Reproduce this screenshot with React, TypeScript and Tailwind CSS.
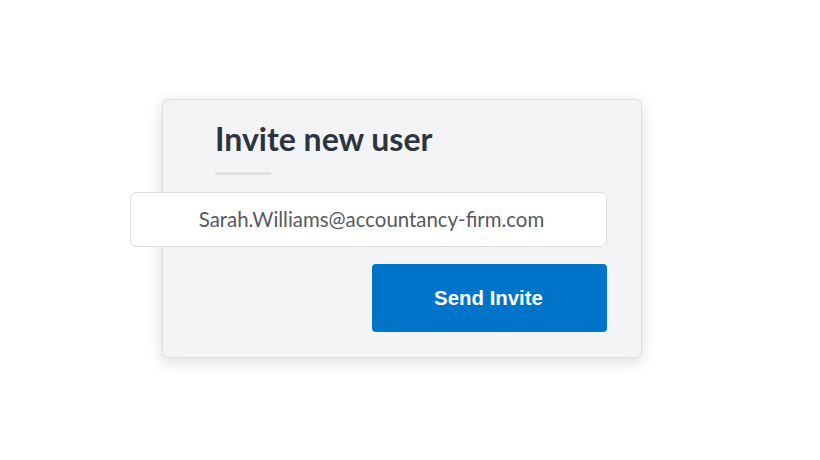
export default function App() {
  return (
    <main className="h-[460px] w-[820px] bg-white pl-[162px] pt-[99px]">
      <div className="w-[480px] h-[259px] rounded-[6px] border border-[#dcdee2] bg-[#f3f4f6] pt-[19px] pr-[34px] shadow-[0_4px_16px_rgba(0,0,0,0.14)]">
        <h1 className="pl-[52px] text-[32px] font-bold leading-[40px] text-[#2d3441] [font-family:Lato,sans-serif]">
          Invite new user
        </h1>
        <div className="ml-[52px] mt-[13px] h-[3px] w-[56px] bg-[#dfe1e4]" />
        <div className="-ml-[33px] mt-[17px] flex h-[55px] items-center justify-center rounded-[6px] border border-[#dcdee2] bg-white text-[20.4px] text-[#555a60] [font-family:Lato,sans-serif]">
          <span className="pl-[6px]">Sarah.Williams@accountancy-firm.com</span>
        </div>
        <div className="mt-[17px] flex justify-end">
          <button
            type="button"
            className="flex h-[68px] w-[235px] items-center justify-center rounded-[4px] bg-[#0074c8] text-[20.4px] font-bold text-white [font-family:'Liberation_Sans',Arial,sans-serif]"
          >
            <span className="pr-[2px]">Send Invite</span>
          </button>
        </div>
      </div>
    </main>
  );
}
